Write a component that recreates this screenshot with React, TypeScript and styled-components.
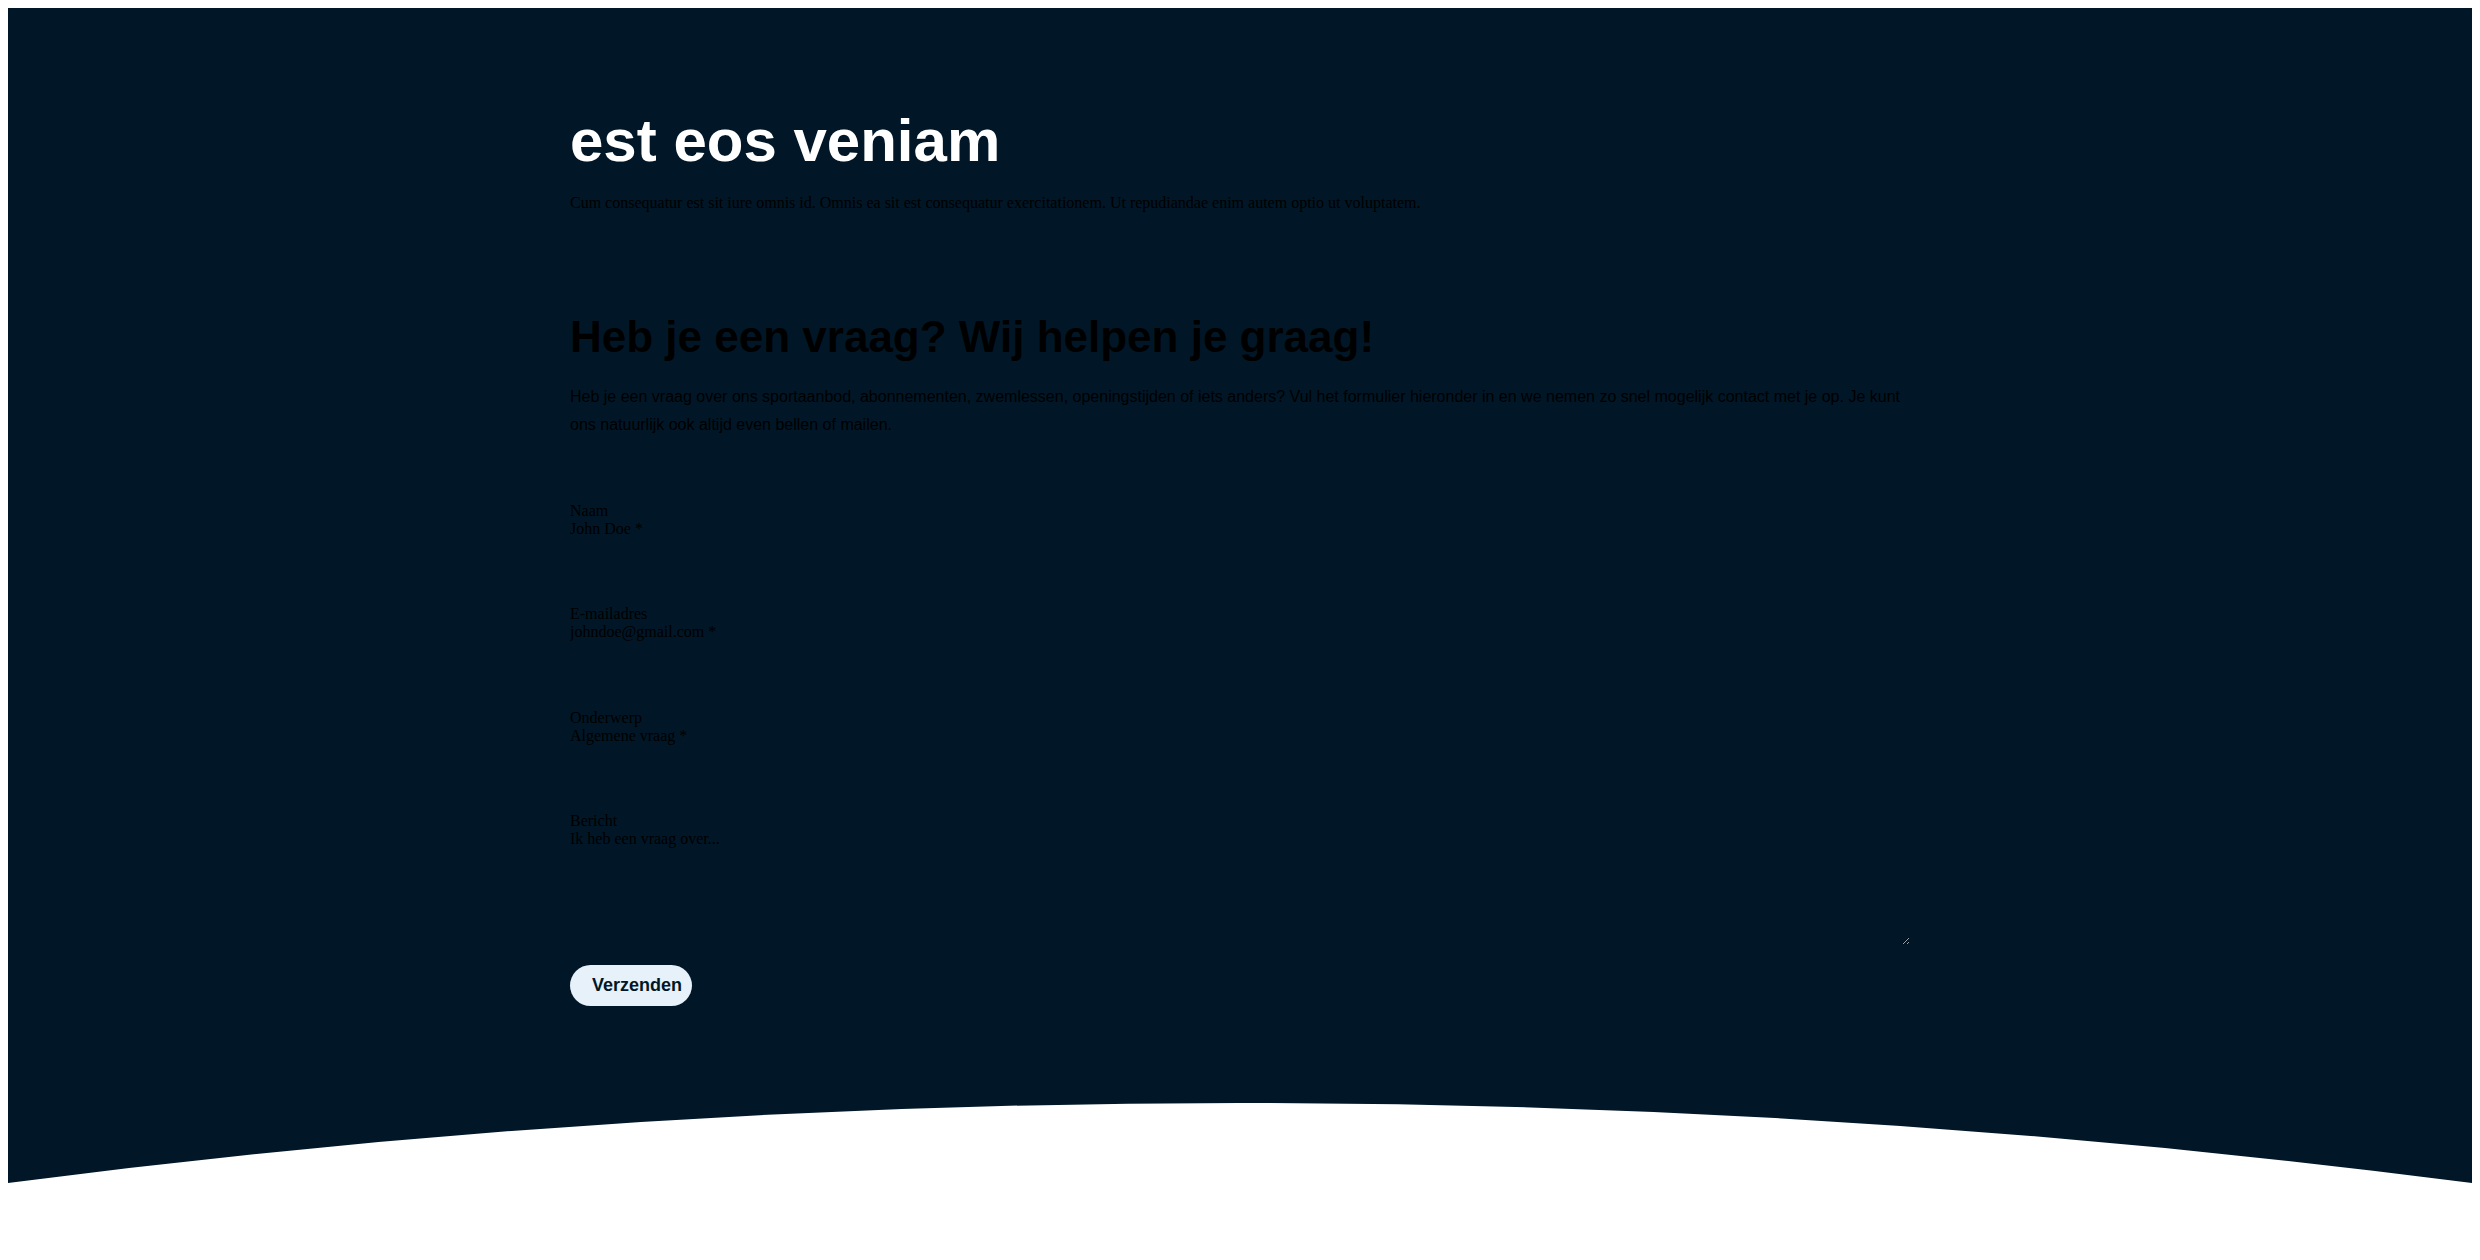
import React from "react";
import styled, { createGlobalStyle } from "styled-components";

const GlobalStyle = createGlobalStyle`
  html, body {
    background: #ffffff;
  }
  body {
    margin: 8px;
    font-family: "Liberation Serif", "Times New Roman", serif;
  }
  * {
    box-sizing: border-box;
  }
`;

const DARK = "#011727";

const Hero = styled.section`
  background: ${DARK};
  display: flex;
  flex-direction: column;
`;

const Container = styled.div`
  width: 100%;
  max-width: 1340px;
  margin: 0 auto;
  padding: 98px 0 97px;
`;

const Title = styled.h1`
  margin: 0;
  font-family: "Liberation Sans", Arial, sans-serif;
  font-weight: 700;
  font-size: 60px;
  line-height: 69px;
  color: #ffffff;
`;

const Lead = styled.p`
  margin: 19px 0 0;
  font-family: "Liberation Serif", "Times New Roman", serif;
  font-size: 16px;
  line-height: 18px;
  color: #000000;
`;

const Heading = styled.h2`
  margin: 100px 0 0;
  font-family: "Liberation Sans", Arial, sans-serif;
  font-weight: 700;
  font-size: 44px;
  line-height: 1.15;
  color: #000000;
`;

const Intro = styled.p`
  margin: 20.5px 0 0;
  font-family: "Liberation Sans", Arial, sans-serif;
  font-size: 16px;
  line-height: 28px;
  color: #000000;
`;

const Form = styled.form`
  margin-top: 62.5px;
  display: flex;
  flex-direction: column;
  gap: 67.5px;
`;

const Field = styled.div`
  display: flex;
  flex-direction: column;
`;

const Label = styled.label`
  display: block;
  font-family: "Liberation Serif", "Times New Roman", serif;
  font-size: 16px;
  line-height: 18px;
  color: #000000;
`;

const fieldText = `
  display: block;
  width: 100%;
  margin: 0;
  padding: 0;
  border: none;
  outline: none;
  background: transparent;
  font-family: "Liberation Serif", "Times New Roman", serif;
  font-size: 16px;
  line-height: 18px;
  color: #000000;
  &::placeholder {
    color: #000000;
    opacity: 1;
  }
`;

const Input = styled.input`
  ${fieldText}
  height: 18px;
`;

const TextArea = styled.textarea`
  ${fieldText}
  height: 115px;
  resize: both;
`;

const Actions = styled.div`
  margin-top: -47.5px;
  display: flex;
`;

const SubmitButton = styled.button`
  height: 41px;
  width: 122px;
  padding: 0 0 0 22px;
  border: none;
  border-radius: 999px;
  background: #e6f1fa;
  color: ${DARK};
  font-family: "Liberation Sans", Arial, sans-serif;
  font-weight: 700;
  font-size: 18px;
  text-align: left;
  cursor: pointer;
`;

const Wave = styled.svg`
  display: block;
  width: 100%;
  height: 80px;
`;

type FieldDef = {
  id: string;
  label: string;
  placeholder: string;
  type?: string;
  multiline?: boolean;
};

const fields: FieldDef[] = [
  { id: "naam", label: "Naam", placeholder: "John Doe *", type: "text" },
  { id: "email", label: "E-mailadres", placeholder: "johndoe@gmail.com *", type: "email" },
  { id: "onderwerp", label: "Onderwerp", placeholder: "Algemene vraag *", type: "text" },
  { id: "bericht", label: "Bericht", placeholder: "Ik heb een vraag over...", multiline: true },
];

export default function App() {
  return (
    <>
      <GlobalStyle />
      <Hero>
        <Container>
          <Title>est eos veniam</Title>
          <Lead>
            Cum consequatur est sit iure omnis id. Omnis ea sit est consequatur exercitationem. Ut
            repudiandae enim autem optio ut voluptatem.
          </Lead>
          <Heading>Heb je een vraag? Wij helpen je graag!</Heading>
          <Intro>
            Heb je een vraag over ons sportaanbod, abonnementen, zwemlessen, openingstijden of iets
            anders? Vul het formulier hieronder in en we nemen zo snel mogelijk contact met je op. Je
            kunt ons natuurlijk ook altijd even bellen of mailen.
          </Intro>
          <Form onSubmit={(e) => e.preventDefault()}>
            {fields.map((f) => (
              <Field key={f.id}>
                <Label htmlFor={f.id}>{f.label}</Label>
                {f.multiline ? (
                  <TextArea id={f.id} placeholder={f.placeholder} />
                ) : (
                  <Input id={f.id} type={f.type} placeholder={f.placeholder} />
                )}
              </Field>
            ))}
            <Actions>
              <SubmitButton type="submit">Verzenden</SubmitButton>
            </Actions>
          </Form>
        </Container>
        <Wave viewBox="0 0 100 80" preserveAspectRatio="none" aria-hidden="true">
          <path d="M0 80 Q50 -80 100 80 Z" fill="#ffffff" />
        </Wave>
      </Hero>
    </>
  );
}
